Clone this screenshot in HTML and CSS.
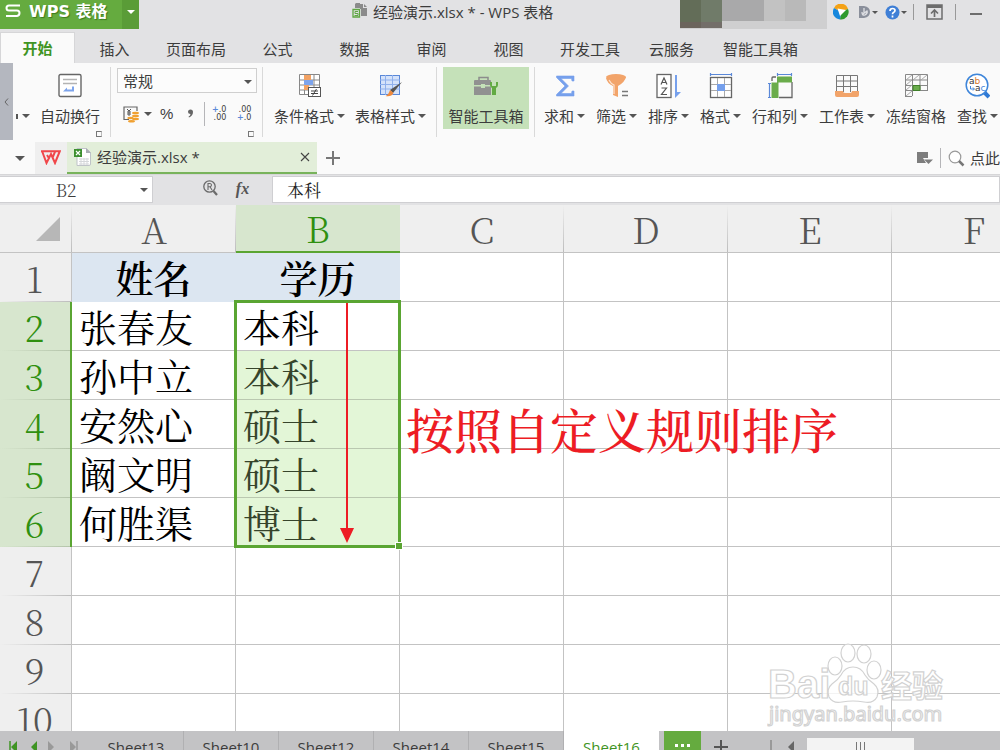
FILE: index.html
```html
<!DOCTYPE html>
<html lang="zh-CN">
<head>
<meta charset="utf-8">
<title>经验演示.xlsx * - WPS 表格</title>
<link rel="stylesheet" href="styles.css">
</head>
<body>
<div class="app">
  <header class="titlebar">
    <button class="brand">
      <svg class="brand-logo" width="16" height="14" viewBox="0 0 16 14"><path d="M15 1.500H4Q1.500 1.500 1.500 4T4 6.500H12Q14.500 6.500 14.500 9T12 12H1" fill="none" stroke="#fff" stroke-width="2"/></svg>
      <span class="brand-name">WPS 表格</span>
      <span class="brand-more"><span class="caret caret-white"></span></span>
    </button>
    <div class="doc-title">
      <svg width="16" height="16" viewBox="0 0 16 16"><path d="M4 1h4v5H3V2z" fill="#8b8b8b"/><path d="M8 2h3v4h4v8H9V7H8z" fill="#8b8b8b"/><path d="M12 2l3 3h-3z" fill="#8b8b8b"/><path d="M1 7.500h6.500V15H1z" fill="#e2e2e4" stroke="#5fa642" stroke-width="1.300"/><path d="M6 9.500H3v2h3v2H2.500" fill="none" stroke="#5fa642"/></svg>
      <span>经验演示.xlsx * - WPS 表格</span>
    </div>
    <div class="account"><i class="m1"></i><i class="m2"></i><i class="m3"></i><i class="m4"></i></div>
    <div class="title-tools">
      <button aria-label="浏览器"><svg width="16" height="16" viewBox="0 0 16 16"><path d="M8 8L1 4A7.500 7.500 0 0 1 15 5z" fill="#f4a216"/><path d="M8 8L15 5A7.500 7.500 0 0 1 7 15.400z" fill="#2e9a2d"/><path d="M8 8L7 15.400A7.500 7.500 0 0 1 1 4z" fill="#1787dc"/><path d="M4.500 4.500L13 6 7 12z" fill="#fff"/></svg></button>
      <button aria-label="文档漫游" class="tool-d"><svg width="13" height="14" viewBox="0 0 13 14"><path d="M1 1h5q6 1 6 6t-6 6H1z" fill="#8a8f9b"/><path d="M6 3v5M4 7q0 4 3 3 3-2 2-4L5 9" fill="none" stroke="#dfe0e4" stroke-width="1.300"/></svg><span class="caret caret-s"></span></button>
      <button aria-label="帮助" class="tool-help"><svg width="15" height="15" viewBox="0 0 15 15"><circle cx="7.500" cy="7.500" r="7" fill="#3f7fd6"/><path d="M5 6q0-2.500 2.500-2.500T10 5.500q0 1.300-1.500 2-1 .5-1 1.700M7.500 10.500v2" fill="none" stroke="#fff" stroke-width="1.700"/></svg><span class="caret caret-s"></span></button>
      <i class="bar"></i>
      <button aria-label="隐藏功能区"><svg width="17" height="16" viewBox="0 0 17 16"><path d="M1 1h15v14H1z" fill="none" stroke="#6d6d6d" stroke-width="1.500"/><path d="M1 1h15v3H1z" fill="#6d6d6d"/><path d="M8.500 13V7M5 9.500L8.500 6l3.500 3.500" fill="none" stroke="#6d6d6d" stroke-width="1.700"/></svg></button>
      <i class="bar"></i>
      <button aria-label="最小化" class="tool-min"><svg width="12" height="16" viewBox="0 0 12 16"><path d="M0 10h12" stroke="#6d6d6d" stroke-width="2"/></svg></button>
    </div>
  </header>

  <nav class="menu">
    <button class="on">开始</button><button>插入</button><button>页面布局</button><button>公式</button><button>数据</button><button>审阅</button><button>视图</button><button>开发工具</button><button>云服务</button><button>智能工具箱</button>
  </nav>

  <section class="ribbon">
    <button class="collapse" aria-label="向左滚动"><svg width="5" height="8" viewBox="0 0 5 8"><path d="M4 .5L1 4l3 3.500" fill="none" stroke="#666"/></svg></button>
    <button class="merge-more" aria-label="合并选项"><i></i><span class="caret"></span></button>
    <div class="group group-wrap">
      <button class="tool"><svg width="24" height="26" viewBox="0 0 24 26"><rect x="1" y="1.500" width="22" height="22" rx="1.500" fill="#fff" stroke="#666" stroke-width="1.400"/><path d="M5 6.500h14M5 10.500h14" stroke="#b3b3b3" stroke-width="1.300"/><path d="M5 18.500l4-4v2h5v-3h2v5H5z" fill="#7da4ec"/></svg><span class="label">自动换行</span></button>
      <i class="launcher"></i>
    </div>
    <div class="group group-number">
      <label class="format"><select aria-label="数字格式"><option>常规</option></select><span class="caret"></span></label>
      <div class="number-row">
        <button class="currency" aria-label="货币"><svg width="17" height="17" viewBox="0 0 17 17"><path d="M6 13.500H1V1h13v4" fill="none" stroke="#666" stroke-width="1.200"/><path d="M4 3l2 2 2-2M6 5v5M4 6h4M4 8h4" fill="none" stroke="#555"/><g fill="#f0a030"><ellipse cx="12.500" cy="7" rx="3.500" ry="1.300"/><ellipse cx="12.500" cy="10" rx="3.500" ry="1.200"/><ellipse cx="12.500" cy="13" rx="3.500" ry="1.200"/><ellipse cx="7.500" cy="12" rx="3.200" ry="1.200"/><ellipse cx="8.500" cy="15.300" rx="3.500" ry="1.300"/></g></svg><span class="caret"></span></button>
        <button class="percent" aria-label="百分比">%</button>
        <button class="comma" aria-label="千位分隔"><svg width="7" height="10" viewBox="0 0 7 10"><path d="M1 3a2.500 2.500 0 0 1 5 0q0 3.500-4 5.500l-.5-.7Q3.500 6.500 3.500 5 1 5 1 3z" fill="#666"/></svg></button>
        <i class="bar"></i>
        <button class="decimal" aria-label="增加小数位"><span><b>+</b>.0</span><span>.00</span></button>
        <button class="decimal" aria-label="减少小数位"><span>.00</span><span><b>+</b>.0</span></button>
      </div>
      <i class="launcher"></i>
    </div>
    <div class="group group-style">
      <button class="tool"><svg width="24" height="26" viewBox="0 0 24 26"><path d="M1.500 1.500h20v20h-20z" fill="#fff"/><path d="M1.500 1.500h20V14M1.500 1.500v20H10M1 7h20M1 12h20M1 17h9M6.500 1v20M16 1v13" fill="none" stroke="#888"/><path d="M6 2h7v5H6z" fill="#f2a264"/><path d="M6 7h9v5H6z" fill="#7da4ec"/><path d="M6 12h5v5H6z" fill="#f2a264"/><rect x="10.500" y="14.500" width="12" height="9" fill="#fff" stroke="#555"/><path d="M13 18h7M13 20.500h7M18.500 16l-4 6.500" stroke="#444"/></svg><span class="label">条件格式<span class="caret"></span></span></button>
      <button class="tool"><svg width="24" height="26" viewBox="0 0 24 26"><rect x="1.500" y="2.500" width="19" height="19" fill="#d4e2fa" stroke="#5a88d8"/><path d="M1 7h20M1 11.500h20M1 16h20M6.500 2v20M13.500 2v20" stroke="#8fb0ec"/><path d="M23 9l-9 11-3-3z" fill="#555"/><path d="M11 17l3.500 3q-2 4-8 3 3-1 4.500-6z" fill="#f08a3c"/></svg><span class="label">表格样式<span class="caret"></span></span></button>
    </div>
    <div class="group group-smart">
      <button class="tool on"><svg width="26" height="26" viewBox="0 0 26 26"><path d="M6 8V4.500h9V8" fill="none" stroke="#8c8c8c" stroke-width="1.500"/><path d="M2 7h15q1 0 1 1v4h-6v-1H8v1H1V8q0-1 1-1zM1 13.500h7v1.500h4v-1.500h6V22H1z" fill="#919191"/><path d="M17 9v3q0 2 2 3v7h4v-7q2-1 2-3V9h-2v4h-4V9z" fill="#62aa43"/></svg><span class="label">智能工具箱</span></button>
    </div>
    <div class="group group-edit">
      <button class="tool"><svg width="20" height="26" viewBox="0 0 20 26"><path d="M19 8V3H1.500v1.500L10 13l-8.500 8.500V23H19v-5h-2l-.5 2.500H6L13.500 13 6 5.500h10.500L17 8z" fill="#76a0ec" stroke="#76a0ec" stroke-width=".6"/></svg><span class="label">求和<span class="caret"></span></span></button>
      <button class="tool"><svg width="24" height="26" viewBox="0 0 24 26"><ellipse cx="11" cy="4" rx="10" ry="3" fill="#f2a46a"/><path d="M1 5q1 5 7 8v9l5 2V13q7-4 8-9z" fill="#f2a46a"/><path d="M4 7q2 4 5 5v9" fill="none" stroke="#fde5d3" stroke-width="1.200"/><path d="M17 18.500h6M17 22.500h6" stroke="#777" stroke-width="1.700"/></svg><span class="label">筛选<span class="caret"></span></span></button>
      <button class="tool"><svg width="25" height="26" viewBox="0 0 25 26"><rect x="1" y="1.500" width="14" height="23" fill="#fff" stroke="#666" stroke-width="1.300"/><path d="M5 11.500L8 5l3 6.500M6 9.500h4M5.500 15h5l-5 6.500h5.500" fill="none" stroke="#555" stroke-width="1.200"/><path d="M19 2h2v17h4l-6 6z" fill="#76a0ec"/></svg><span class="label">排序<span class="caret"></span></span></button>
      <button class="tool"><svg width="24" height="26" viewBox="0 0 24 26"><path d="M1.500 0v3M22.500 0v3M1.500 1.500h21" stroke="#5a88d8" stroke-width="1.200"/><rect x="1.500" y="4.500" width="21" height="20" fill="#fff" stroke="#666" stroke-width="1.300"/><path d="M2 11.500h20M2 17.500h20M8.500 5v19M15.500 5v19" stroke="#aaa"/><path d="M8 11h8v7H8z" fill="#76a0ec"/></svg><span class="label">格式<span class="caret"></span></span></button>
      <button class="tool"><svg width="25" height="26" viewBox="0 0 25 26"><path d="M9.500 0v3M23.500 0v3M9.500 1.500h14M0 10.500h3M0 24.500h3M1.500 10v15" stroke="#5a88d8" stroke-width="1.200"/><path d="M4 8V5q0-1 1-1h3M24 9v15.500H11" fill="none" stroke="#666" stroke-width="1.300"/><path d="M9 3.500h15v6H9zM3.500 9.500h7V25h-7z" fill="#6aac4b"/></svg><span class="label">行和列<span class="caret"></span></span></button>
      <button class="tool"><svg width="26" height="26" viewBox="0 0 26 26"><path d="M2.500 19V2.500h21V19M2 8h21M2 13.500h21M9.500 2v17M16.500 2v17" fill="none" stroke="#777"/><path d="M1 18h8q0 2 2 2h5q2 0 2-2h7v4q0 2-2 2H3q-2 0-2-2z" fill="#f2a46a"/></svg><span class="label">工作表<span class="caret"></span></span></button>
      <button class="tool"><svg width="25" height="26" viewBox="0 0 25 26"><path d="M1.500 24V1.500h22V17M1 7h23M1 12.500h23M1 17.500h23M8.500 1v22M16 1v17M1 23.500h7" fill="none" stroke="#888"/><path d="M2 7l6-5M9 7l6-5M17 7l6-5M2 12l6-5M2 17l6-5M2 23l6-5" stroke="#aaa"/><path d="M9 12.500h7v5H9z" fill="#6aac4b" stroke="#3f7f29"/></svg><span class="label">冻结窗格</span></button>
      <button class="tool"><svg width="25" height="26" viewBox="0 0 25 26"><path d="M19 19l5 5" stroke="#2f7ad6" stroke-width="4"/><circle cx="12" cy="12" r="10.800" fill="#fff" stroke="#3f86da" stroke-width="1.500"/><text x="4" y="11" class="ico">a<tspan class="ico-b">b</tspan></text><text x="10" y="18" class="ico">a<tspan class="ico-c">c</tspan></text><path d="M5.500 13v3H9M8 14.500l1.500 1.500L8 17.500" fill="none" stroke="#3f86da"/></svg><span class="label">查找<span class="caret"></span></span></button>
    </div>
  </section>

  <nav class="files">
    <button class="files-list" aria-label="文件列表"><span class="caret caret-l"></span></button>
    <button class="wps-tab" aria-label="WPS 首页"><svg width="20" height="15" viewBox="0 0 20 15"><path d="M0 1.200h14M1.200 1.500L5.500 13 10 4l4 9 4.800-11.800h-4.500L11.800 7M6 5l2.500 4" fill="none" stroke="#f0474b" stroke-width="2"/></svg></button>
    <div class="file-tab">
      <svg width="18" height="20" viewBox="0 0 18 20"><path d="M3 1.500h9.500l4 4V17q0 1.500-1.500 1.500H3z" fill="#fff" stroke="#bfc3c8"/><path d="M12 1l5 5h-5z" fill="#a9adb3"/><path d="M5 12h10M5 14.500h10M5 17h10M7 11v7M10 11v7M13 11v7" stroke="#d5d7da"/><path d="M0 2h8v8H0z" fill="#3d9030"/><path d="M2 4l4 4M6 4L2 8" stroke="#fff" stroke-width="1.200"/></svg>
      <span>经验演示.xlsx *</span>
      <button class="file-close" aria-label="关闭"><svg width="10" height="10" viewBox="0 0 10 10"><path d="M1 1l8 8M9 1L1 9" stroke="#444" stroke-width="1.100"/></svg></button>
    </div>
    <button class="file-add" aria-label="新建"><svg width="14" height="14" viewBox="0 0 14 14"><path d="M7 0v14M0 7h14" stroke="#777" stroke-width="2"/></svg></button>
    <div class="files-right">
      <svg width="17" height="14" viewBox="0 0 17 14"><path d="M1 1h11v6H7l3 5H1z" fill="#7d7d7d"/><path d="M8 8.500h9L12.500 13z" fill="#7d7d7d"/></svg>
      <i class="bar"></i>
      <svg width="17" height="17" viewBox="0 0 17 17"><circle cx="7" cy="7" r="5.800" fill="#fff" stroke="#999" stroke-width="1.200"/><path d="M11 11l4.500 4.500" stroke="#777" stroke-width="2.500"/></svg>
      <span>点此</span>
    </div>
  </nav>

  <section class="formula">
    <label class="name-box"><input aria-label="名称框" value="B2"><span class="caret"></span></label>
    <button class="lens" aria-label="浏览公式"><svg width="15" height="16" viewBox="0 0 15 16"><circle cx="6.500" cy="6.500" r="5.700" fill="none" stroke="#6b6b6b" stroke-width="1.300"/><path d="M10.500 11l3.500 4" stroke="#6b6b6b" stroke-width="2.200"/><path d="M5 10V3.500h2q1.500.2 1.500 1.600T7 6.700H5M7 6.700L9 10" fill="none" stroke="#6b6b6b" stroke-width="1.100"/></svg></button>
    <button class="fx">fx</button>
    <input class="formula-input" aria-label="编辑栏" value="本科">
  </section>

  <main class="sheet">
    <table class="grid">
      <colgroup><col class="c-head"><col class="c"><col class="c"><col class="c"><col class="c"><col class="c"><col class="c"></colgroup>
      <thead><tr><th class="corner"><svg width="24" height="24" viewBox="0 0 24 24"><path d="M24 0v24H0z" fill="#b7b7b7"/></svg></th><th>A</th><th class="sel">B</th><th>C</th><th>D</th><th>E</th><th>F</th></tr></thead>
      <tbody>
        <tr><th>1</th><td class="cap">姓名</td><td class="cap">学历</td><td></td><td></td><td></td><td></td></tr>
        <tr><th class="sel">2</th><td>张春友</td><td class="first">本科
          <div class="selection"><svg class="arrow" width="16" height="242" viewBox="0 0 16 242"><path d="M8 0v228" stroke="#ed1c24" stroke-width="2"/><path d="M1 225h14L8 240z" fill="#ed1c24"/></svg><i class="handle"></i></div></td><td></td><td></td><td></td><td></td></tr>
        <tr><th class="sel">3</th><td>孙中立</td><td class="shade">本科</td><td></td><td></td><td></td><td></td></tr>
        <tr><th class="sel">4</th><td>安然心</td><td class="shade">硕士</td><td></td><td></td><td></td><td></td></tr>
        <tr><th class="sel">5</th><td>阚文明</td><td class="shade">硕士</td><td></td><td></td><td></td><td></td></tr>
        <tr><th class="sel">6</th><td>何胜渠</td><td class="shade">博士</td><td></td><td></td><td></td><td></td></tr>
        <tr><th>7</th><td></td><td></td><td></td><td></td><td></td><td></td></tr>
        <tr><th>8</th><td></td><td></td><td></td><td></td><td></td><td></td></tr>
        <tr><th>9</th><td></td><td></td><td></td><td></td><td></td><td></td></tr>
        <tr><th>10</th><td></td><td></td><td></td><td></td><td></td><td></td></tr>
      </tbody>
    </table>
    <p class="note">按照自定义规则排序</p>
    <svg class="mark" width="184" height="90" viewBox="0 0 184 90">
      <g fill="#fff" fill-opacity=".8" stroke="#d2d2d2" stroke-width="1.200">
        <text x="1" y="57" class="mark-bai">Bai</text>
        <path d="M86 26q8 0 12 8 3 5 9 9 6 5 3 13-4 7-13 5-11-2-22 0-9 2-13-5-3-8 3-13 6-4 9-9 4-8 12-8z"/>
        <ellipse cx="68" cy="25" rx="7" ry="9"/><ellipse cx="81" cy="12" rx="7" ry="9"/><ellipse cx="97" cy="13" rx="7" ry="9"/><ellipse cx="107" cy="29" rx="7" ry="9"/>
        <text x="71" y="54" class="mark-du">du</text>
        <text x="114" y="56" class="mark-cn">经验</text>
        <text x="2" y="80" class="mark-url">jingyan.baidu.com</text>
      </g>
    </svg>
  </main>

  <footer class="tabs">
    <div class="tabs-nav">
      <svg width="70" height="14" viewBox="0 0 70 14"><path d="M2 1v12" stroke="#3f9424" stroke-width="1.500"/><path d="M9 1v12L3 7zM29 1v12l-6-6z" fill="#3f9424"/><path d="M40 1v12l6-6zM62 1v12l6-6z" fill="#999"/><path d="M69 1v12" stroke="#999" stroke-width="1.500"/></svg>
    </div>
    <button>Sheet13</button><button>Sheet10</button><button>Sheet12</button><button>Sheet14</button><button>Sheet15</button><button class="on">Sheet16</button>
    <button class="tabs-more" aria-label="更多工作表"><svg width="16" height="4" viewBox="0 0 16 4"><path d="M0 0h3v3H0zM6 0h3v3H6zM12 0h3v3h-3z" fill="#fff"/></svg></button>
    <button class="tabs-add" aria-label="新建工作表"><svg width="14" height="14" viewBox="0 0 14 14"><path d="M7 0v14M0 7h14" stroke="#555" stroke-width="2"/></svg></button>
    <div class="scroll"><i class="scroll-grip"></i><svg width="8" height="14" viewBox="0 0 8 14"><path d="M7 1v12L1 7z" fill="#666"/></svg><div class="thumb"><i></i><i></i><i></i></div></div>
  </footer>
</div>
</body>
</html>
```

FILE: styles.css
```css
* { box-sizing: border-box; }
body {
  margin: 0;
  font: 15px/20px "Open Sans", "Noto Sans CJK SC", sans-serif;
  font-weight: 370;
  color: #3c3c3c;
}
button, input, select { font: inherit; color: inherit; border: 0; padding: 0; margin: 0; background: none; border-radius: 0; }
svg { display: block; flex: none; }
.app { height: 100vh; display: flex; flex-direction: column; overflow: hidden; background: #e2e2e4; }
.app > * { flex: none; }
.bar { width: 1px; background: #b5b5b8; }
.caret { display: inline-block; flex: none; border: 4px solid transparent; border-top-color: #555; border-bottom: 0; }
.caret-white { border-top-color: #fff; }
.caret-s { border-width: 3px; border-bottom: 0; }
.caret-l { border-width: 5px; border-bottom: 0; }

.titlebar { display: flex; height: 32px; align-items: flex-start; }
.brand { display: flex; width: 139px; height: 29px; background: #65ab3f; color: #fff; flex: none; }
.brand-logo { margin: 4px 8px 0 5px; }
.brand-name { font: bold 16px/24px "DejaVu Sans", "Noto Sans CJK SC", sans-serif; flex: 1; text-align: left; white-space: nowrap; text-shadow: 1px 1px 1px #3d7a1d; }
.brand-more { width: 17px; height: 29px; background: #5a9c37; display: flex; justify-content: center; padding-top: 10px; }
.doc-title { display: flex; flex: 1; gap: 5px; padding: 2px 0 0 213px; white-space: nowrap; }
.account { display: flex; height: 29px; width: 147px; background: #cfcfd0; }
.account i { height: 21px; width: 21px; background: #b9b9b9; }
.account .m1 { height: 28px; background: #636d58; border-bottom: 6px solid #6b645c; }
.account .m2 { height: 28px; background: #707b69; border-bottom: 6px solid #736e69; }
.account .m3 { background: #a9a9aa; }
.account .m4 { background: #a9a9aa; box-shadow: 21px 0 #c2c2c2, 42px 0 #b9b9b9; }
.title-tools { display: flex; padding: 4px 18px 0 6px; height: 26px; }
.title-tools button { display: flex; align-items: center; height: 16px; }
.title-tools .caret { margin-left: 1px; }
.title-tools .tool-d { margin-left: 9px; }
.title-tools .tool-help { margin: 0 6px 0 7px; }
.title-tools .bar { height: 16px; background: #999; margin-right: 12px; }
.title-tools .bar + button { margin-right: 12px; }
.title-tools .bar + .tool-min { margin: 0 0 0 2px; }

.menu { display: flex; height: 31px; }
.menu button { min-width: 77px; padding: 2px 13px 0; }
.menu .on { min-width: 75px; margin-right: 1px; background: #fafafa; border: 1px solid #d6d6d8; border-bottom: 0; color: #3f9424; font-weight: 700; padding-top: 0; }

.ribbon { display: flex; height: 79px; background: #fafafa; }
.collapse { width: 13px; height: 77px; background: #b4b7bf; display: flex; align-items: center; justify-content: center; flex: none; }
.merge-more { width: 18px; display: flex; gap: 4px; align-items: center; padding: 27px 0 0 3px; flex: none; }
.merge-more i { width: 2px; height: 5px; background: #555; }
.group { position: relative; display: flex; height: 70px; margin-top: 4px; border-right: 1px solid #d9d9d9; flex: none; }
.group-wrap { width: 80px; padding-left: 4px; }
.group-number { flex-direction: column; width: 152px; padding: 1px 5px 0 6px; }
.group-style { width: 174px; padding-left: 6px; }
.group-smart { width: 98px; padding: 0 5px 0 6px; }
.group-edit { border: 0; padding-left: 4px; }
.tool { display: flex; flex-direction: column; align-items: center; height: 62px; padding: 6px 5px 0; white-space: nowrap; gap: 7px; }
.tool.on { flex: 1; background: #c5e1b9; }
.label { display: flex; align-items: center; gap: 3px; }
.group-edit .tool + .tool { margin-left: 1px; }
.launcher { position: absolute; right: 8px; bottom: 0; width: 6px; height: 6px; border: 1px solid #777; border-right-color: #bbb; }
.format { position: relative; display: flex; width: 140px; height: 25px; border: 1px solid #cfcfcf; background: #fcfcfc; }
.format select { appearance: none; width: 100%; padding-left: 5px; }
.format .caret { position: absolute; right: 4px; top: 11px; }
.number-row { display: flex; height: 24px; margin-top: 9px; align-items: center; }
.currency { display: flex; align-items: center; gap: 4px; margin-left: 6px; }
.percent { margin-left: 8px; font: 15px/20px "Liberation Sans", sans-serif; }
.comma { margin-left: 14px; }
.number-row .bar { height: 24px; margin: 0 7px 0 10px; }
.decimal { display: flex; flex-direction: column; align-items: flex-end; font: 8px/8px "DejaVu Sans", sans-serif; width: 14px; }
.decimal + .decimal { margin-left: 11px; }
.decimal b { color: #5a88d8; }
.ico { font: 9px "DejaVu Sans", sans-serif; fill: #333; }
.ico-b { fill: #d9762b; }
.ico-c { fill: #3f86da; }

.files { display: flex; height: 32px; background: #fafafa; align-items: stretch; }
.files-list { width: 35px; display: flex; align-items: center; justify-content: flex-end; padding-right: 10px; }
.wps-tab { width: 32px; background: #efefef; display: flex; align-items: center; justify-content: center; padding-bottom: 2px; }
.file-tab { display: flex; align-items: center; width: 250px; gap: 5px; padding: 0 7px; background: #e2eed9; border-bottom: 2px solid #78b35b; }
.file-close { margin-left: auto; }
.file-add { padding: 0 9px; }
.files-right { display: flex; align-items: center; gap: 7px; margin-left: auto; white-space: nowrap; }
.files-right .bar { height: 20px; }
.files-right span { margin-left: -2px; }

.formula { display: flex; height: 31px; padding: 1px 0 2px; align-items: stretch; border-top: 1px solid #d6d6d8; }
.name-box { position: relative; width: 153px; background: #fff; border: 1px solid #cfcfd2; border-left: 0; }
.name-box input { width: 100%; height: 100%; padding-right: 20px; text-align: center; font: 17px "Noto Serif CJK SC", "Liberation Serif", serif; font-weight: 300; }
.name-box .caret { position: absolute; right: 4px; top: 11px; }
.lens { margin: 0 17px 3px 50px; }
.fx { font: italic bold 16px "Liberation Serif", serif; width: 15px; margin-bottom: 2px; color: #555; }
.formula-input { flex: 1; min-width: 0; margin-left: 22px; padding-left: 14px; background: #fff; border: 1px solid #cfcfd2; font: 17px "Noto Serif CJK SC", "Noto Sans CJK SC", serif; color: #222; }

.app > .sheet { position: relative; flex: 1; min-height: 0; overflow: hidden; background: #fff; }
.grid { width: 1056px; table-layout: fixed; border-collapse: separate; border-spacing: 0; font: 38px/44px "Noto Serif CJK SC", "Noto Sans CJK SC", "Liberation Serif", serif; color: #000; }
.c-head { width: 72px; }
.c { width: 164px; }
.grid td, .grid th { height: 49px; padding: 0 7px; border-right: 1px solid #c3c3c3; border-bottom: 1px solid #c3c3c3; white-space: nowrap; font-weight: 400; }
.grid th { background: #efefef; color: #555; font-size: 36px; font-weight: 300; }
.grid thead th { height: 48px; border-right: 0; background: linear-gradient(#efefef, #bdbdbd) right / 1px 100% no-repeat #efefef; }
.grid thead .sel { background: #d7e6ce; border-bottom: 2px solid #5aa532; }
.grid .corner svg { margin-left: 29px; }
.grid tbody th { padding-right: 9px; border-bottom: 0; background: linear-gradient(90deg, #efefef, #bdbdbd) bottom / 100% 1px no-repeat #efefef; }
.grid .sel { color: #2f9010; }
.grid tbody .sel { background: linear-gradient(90deg, #d7e6ce, #b5c5ab) bottom / 100% 1px no-repeat #d7e6ce; border-right: 2px solid #5aa532; padding-right: 8px; }
.grid .cap { background: #dce6f1; border-color: #dce6f1; text-align: center; font-weight: 600; }
.grid .shade { background: #e3f6d7; color: #36442b; border-bottom-color: #bac8b0; }
.grid .first { position: relative; }
.selection { position: absolute; z-index: 1; left: -2px; top: -2px; width: 167px; height: 248px; border: 3px solid #5aa532; }
.arrow { position: absolute; left: 102px; top: 0; }
.handle { position: absolute; right: -4px; bottom: -4px; width: 6px; height: 6px; background: #5aa532; outline: 1px solid #fff; }
.note { position: absolute; left: 406px; top: 194px; margin: 0; font: 500 48px/60px "Noto Serif CJK SC", "Noto Sans CJK SC", serif; color: #ed1c24; white-space: nowrap; }
.mark { position: absolute; right: 49px; bottom: 0; }
.mark-bai { font: bold 40px "Liberation Sans", sans-serif; }
.mark-du { font: bold 25px "Liberation Sans", sans-serif; }
.mark-cn { font: bold 31px "Noto Sans CJK SC", sans-serif; }
.mark-url { font: 20px "Noto Sans", sans-serif; }

.tabs { display: flex; height: 19px; overflow: hidden; background: #c3c3c5; align-items: flex-start; }
.tabs > button { width: 95px; height: 32px; flex: none; border-right: 1px solid #b0b0b2; }
.tabs-nav { width: 89px; flex: none; padding: 9px 0 0 8px; }
.tabs > .on { background: #fff; color: #3f9424; border: 0; }
.tabs > .tabs-more { width: 37px; margin-left: 5px; background: #65ab3f; border: 0; padding: 0 0 2px 11px; }
.tabs > .tabs-add { width: 40px; border: 0; padding-left: 13px; }
.scroll { display: flex; flex: 1; padding-top: 7px; }
.scroll-grip { width: 2px; height: 14px; margin: 2px 15px 0 29px; background: #999; }
.scroll svg { margin: 2px 12px 0 0; }
.thumb { display: flex; gap: 3px; justify-content: center; width: 107px; height: 20px; padding-top: 4px; background: #f3f3f3; }
.thumb i { width: 1px; height: 12px; background: #777; }
```
